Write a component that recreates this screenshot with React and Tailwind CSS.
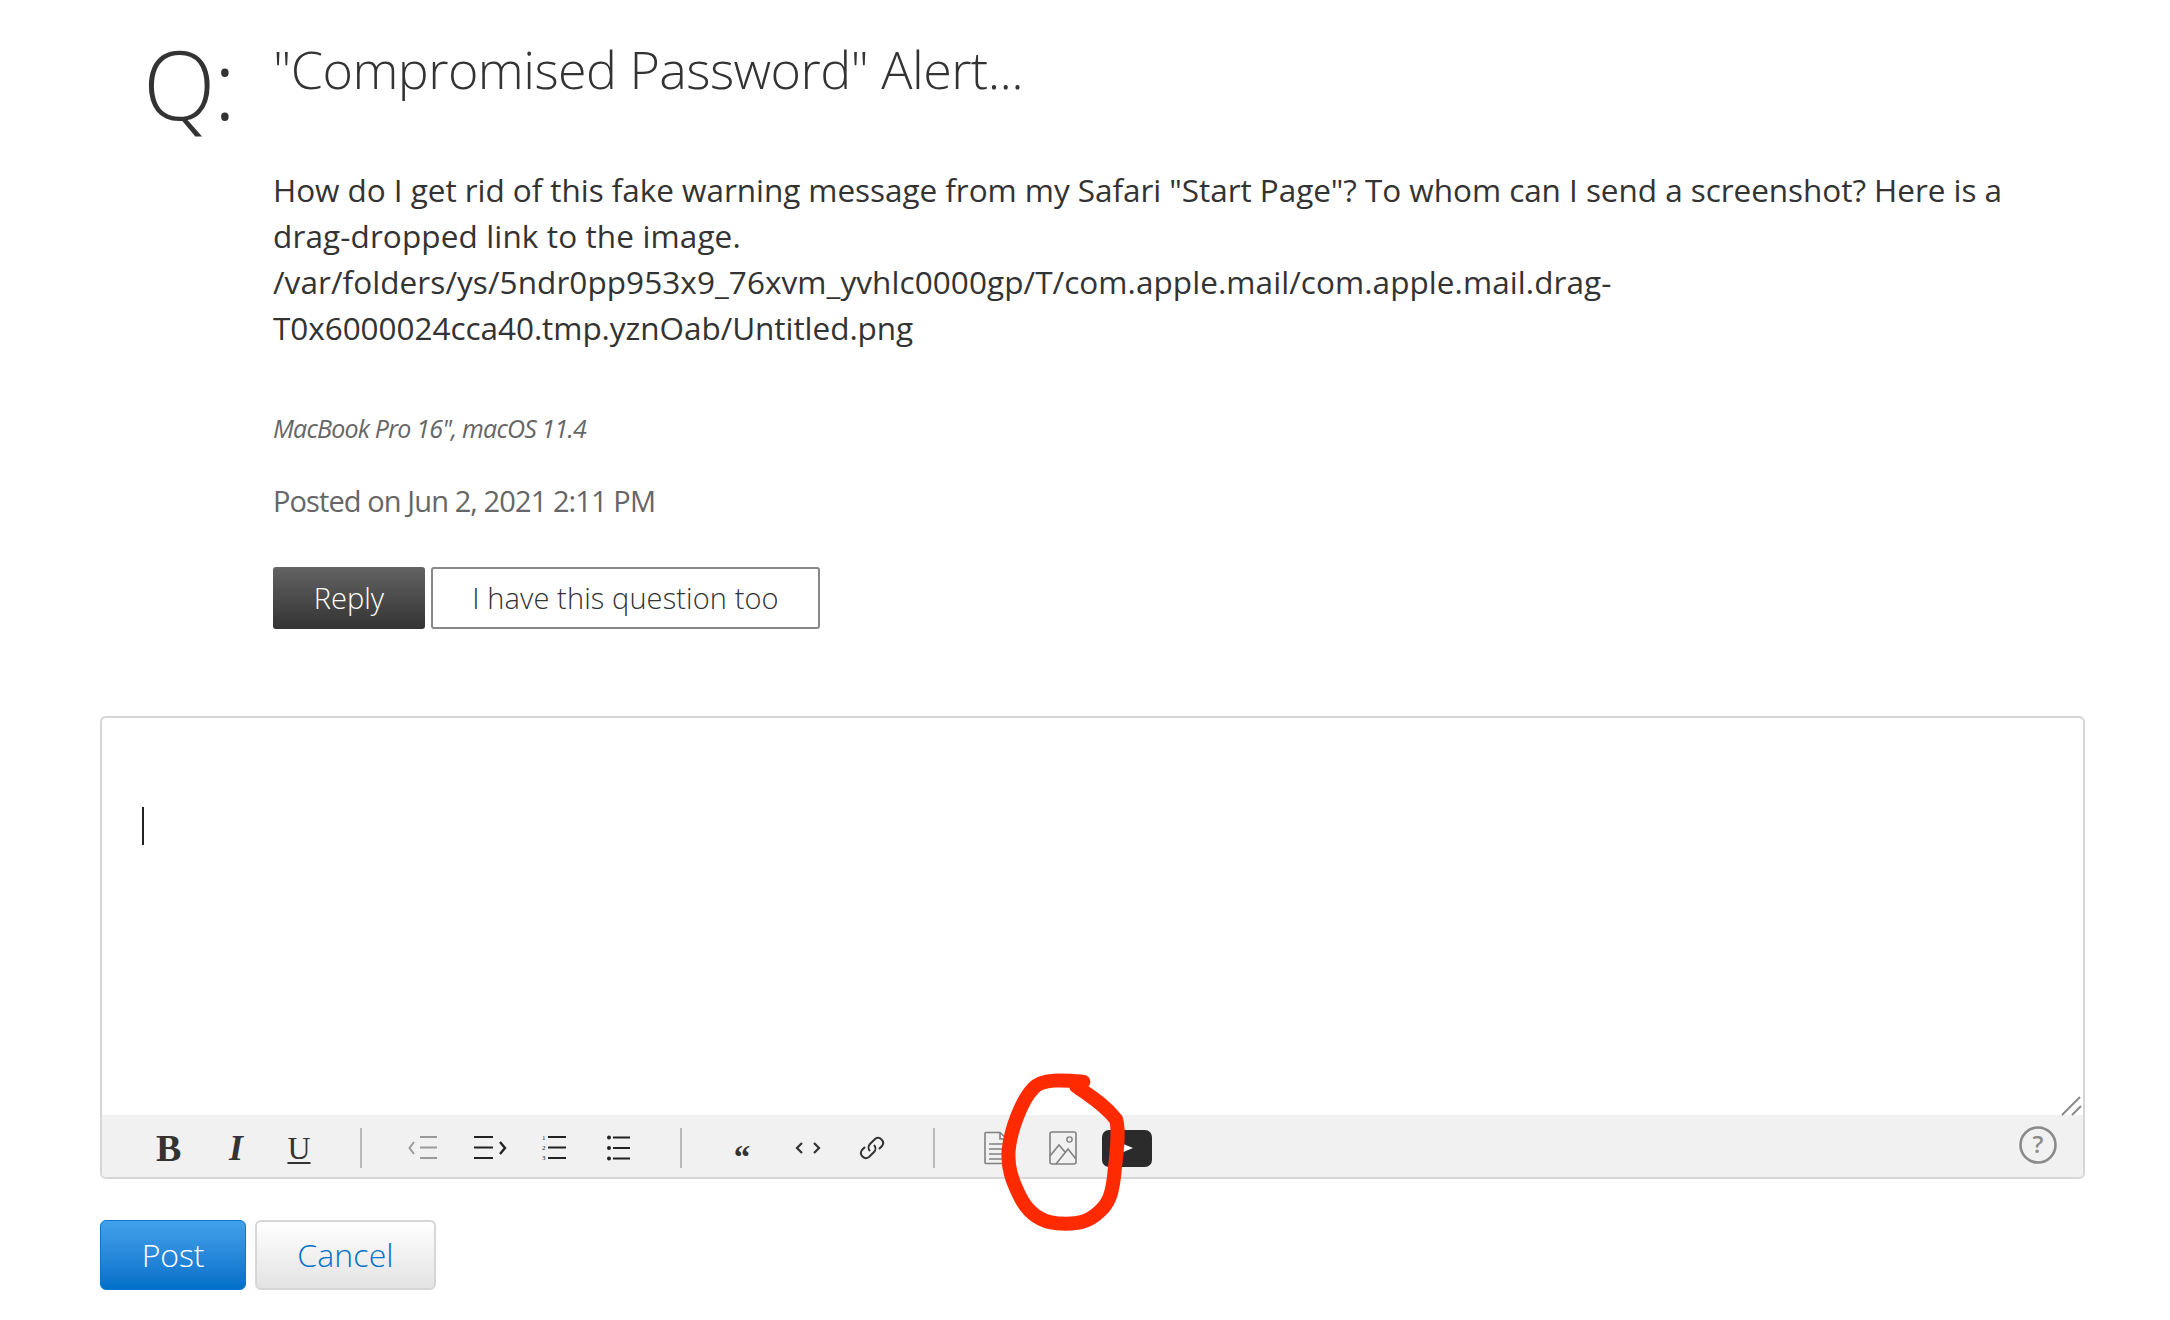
import React from "react";

const Sep = ({ ml }) => <div className={`w-[2px] h-[40px] bg-[#b9b9b9] shrink-0 ${ml}`} />;

const S = ({ w, ml, children }) => (
  <svg width={w} height="40" viewBox={`0 0 ${w} 40`} fill="none" className={`shrink-0 ${ml}`}>{children}</svg>
);

export default function App() {
  return (
    <div className="relative w-[2170px] h-[1320px] bg-white overflow-hidden text-[#333] font-['Open_Sans',sans-serif]">
      <div className="flex pl-[143px] pt-[26px]">
        <div className="w-[130px] shrink-0 text-[95px] leading-[115px] font-light text-[#333] tracking-[-2px] h-[115px]">Q:</div>
        <div className="flex flex-col items-start">
          <h1 className="text-[52px] leading-[72px] font-light tracking-[-0.56px] text-[#333] whitespace-nowrap mt-[7px]">"Compromised Password" Alert...</h1>
          <div className="mt-[62px] text-[31.5px] leading-[46px] tracking-[-0.05px] text-[#333] whitespace-nowrap">
            <p>How do I get rid of this fake warning message from my Safari "Start Page"? To whom can I send a screenshot? Here is a</p>
            <p className="tracking-[0.12px]">drag-dropped link to the image.</p>
            <p className="tracking-[0.07px]">/var/folders/ys/5ndr0pp953x9_76xvm_yvhlc0000gp/T/com.apple.mail/com.apple.mail.drag-</p>
            <p>T0x6000024cca40.tmp.yznOab/Untitled.png</p>
          </div>
          <p className="mt-[59px] text-[25px] leading-[36px] italic tracking-[-0.8px] text-[#666] whitespace-nowrap">MacBook Pro 16", macOS 11.4</p>
          <p className="mt-[35px] text-[29px] leading-[40px] tracking-[-0.9px] text-[#666] whitespace-nowrap">Posted on Jun 2, 2021 2:11 PM</p>
          <div className="mt-[46px] flex gap-[6px]">
            <button className="w-[152px] h-[62px] rounded-[3px] bg-gradient-to-b from-[#646464] to-[#333333] text-white text-[29px] font-light tracking-[0px]">Reply</button>
            <button className="w-[389px] h-[62px] rounded-[3px] border-2 border-[#888] bg-white text-[#333] text-[29px] font-light tracking-[0.1px]">I have this question too</button>
          </div>
        </div>
      </div>

      <div className="relative ml-[100px] mt-[87px] w-[1985px] h-[463px] border-2 border-[#d6d6d6] rounded-[6px] flex flex-col bg-white">
        <div className="flex-1 pl-[40px] pt-[89px]">
          <div className="w-[2px] h-[38px] bg-[#222]" />
        </div>
        <svg width="22" height="20" viewBox="0 0 22 20" className="absolute right-[0px] top-[378px]" fill="none">
          <path d="M1 19 L19 1 M11 19 L20 10" stroke="#8a8a8a" strokeWidth="2" />
        </svg>
        <div className="h-[62px] pt-[4px] bg-[#f1f1f1] flex items-center rounded-b-[4px] shrink-0">
          <span className="ml-[54px] w-[24px] text-center shrink-0 font-['Liberation_Serif',serif] font-bold text-[38px] leading-[40px] text-[#333]">B</span>
          <span className="ml-[46px] w-[20px] text-center shrink-0 font-['Liberation_Serif',serif] font-bold italic text-[36px] leading-[40px] text-[#333]">I</span>
          <span className="ml-[41px] w-[24px] text-center shrink-0 font-['Liberation_Serif',serif] underline underline-offset-[3px] decoration-2 text-[32px] leading-[40px] text-[#333]">U</span>
          <Sep ml="ml-[49px]" />
          <S w={30} ml="ml-[46px]">
            <path d="M6 14 L1.5 20 L6 26" stroke="#999" strokeWidth="2" />
            <path d="M12 9H29M12 19.5H29M12 30H29" stroke="#999" strokeWidth="2" />
          </S>
          <S w={33} ml="ml-[36px]">
            <path d="M0 9H19M0 19.5H19M0 30H19" stroke="#222" strokeWidth="2" />
            <path d="M26 14 L31 20 L26 26" stroke="#222" strokeWidth="2.4" />
          </S>
          <S w={25} ml="ml-[35px]">
            <text x="0" y="12" fontSize="7" fontFamily="Liberation Serif" fill="#222">1</text>
            <text x="0" y="22" fontSize="7" fontFamily="Liberation Serif" fill="#222">2</text>
            <text x="0" y="32" fontSize="7" fontFamily="Liberation Serif" fill="#222">3</text>
            <path d="M6 9H24M6 19.5H24M6 30H24" stroke="#222" strokeWidth="2" />
          </S>
          <S w={23} ml="ml-[40px]">
            <circle cx="2" cy="9.5" r="2" fill="#222" /><circle cx="2" cy="20" r="2" fill="#222" /><circle cx="2" cy="30.5" r="2" fill="#222" />
            <path d="M6 9.5H23M6 20H23M6 30.5H23" stroke="#222" strokeWidth="2" />
          </S>
          <Sep ml="ml-[50px]" />
          <span className="ml-[49px] w-[22px] text-center shrink-0 font-['Liberation_Serif',serif] font-bold text-[33px] leading-[40px] h-[40px] pt-[9px] text-[#333]">“</span>
          <S w={26} ml="ml-[42px]">
            <path d="M7 15 L2 20 L7 25M19 15 L24 20 L19 25" stroke="#333" strokeWidth="2.2" />
          </S>
          <S w={26} ml="ml-[38px]">
            <path d="M11 23 a5 5 0 0 1 0 -7 l5 -5 a5 5 0 0 1 7 7 l-3 3" stroke="#333" strokeWidth="2" />
            <path d="M15 17 a5 5 0 0 1 0 7 l-5 5 a5 5 0 0 1 -7 -7 l3 -3" stroke="#333" strokeWidth="2" />
          </S>
          <Sep ml="ml-[48px]" />
          <svg width="24" height="34" viewBox="0 0 24 34" fill="none" className="shrink-0 ml-[49px]">
            <path d="M1 2.5 a1 1 0 0 1 1 -1 H16 L23 8 V31.5 a1 1 0 0 1 -1 1 H2 a1 1 0 0 1 -1 -1 Z" stroke="#808080" strokeWidth="1.6" />
            <path d="M16 1.5 V8 H23M5 13H19M5 18H19M5 23H19M5 28H19" stroke="#808080" strokeWidth="1.6" />
          </svg>
          <svg width="28" height="34" viewBox="0 0 28 34" fill="none" className="shrink-0 ml-[41px]">
            <rect x="1" y="1" width="26" height="32" rx="2" stroke="#808080" strokeWidth="1.6" />
            <circle cx="20.5" cy="8.5" r="2.6" stroke="#808080" strokeWidth="1.4" />
            <path d="M1 25 L10 14 L16 21M7 33 L19 18 L27 28" stroke="#808080" strokeWidth="1.6" />
          </svg>
          <div className="ml-[25px] w-[50px] h-[37px] rounded-[7px] bg-[#2b2b2b] flex items-center justify-center shrink-0">
            <svg width="12" height="12" viewBox="0 0 12 12"><path d="M0 1 L12 6 L0 11 Z" fill="#fff" /></svg>
          </div>
          <svg width="40" height="40" viewBox="0 0 40 40" fill="none" className="shrink-0 ml-auto mr-[25px] -mt-[6px]">
            <circle cx="20" cy="20" r="17.5" stroke="#8a8a8a" strokeWidth="2.6" />
            <text x="20" y="28" textAnchor="middle" fontSize="24" fontFamily="Open Sans" fontWeight="600" fill="#8a8a8a">?</text>
          </svg>
        </div>
      </div>

      <div className="ml-[100px] mt-[41px] flex gap-[9px]">
        <button className="w-[146px] h-[70px] rounded-[6px] border border-[#0d76cc] bg-gradient-to-b from-[#42a1ec] to-[#0070c9] text-white text-[32px] font-light tracking-[-0.2px]">Post</button>
        <button className="w-[181px] h-[70px] rounded-[6px] border-2 border-[#d6d6d6] bg-gradient-to-b from-white to-[#e3e3e3] text-[#0070c9] text-[32px] font-light tracking-[0.1px]">Cancel</button>
      </div>

      <svg width="300" height="190" viewBox="0 0 900 570" fill="none" className="absolute left-[900px] top-[1060px]">
        <path d="M528 78 C565 105 610 130 648 178 C660 215 648 290 642 350 C636 400 628 430 595 458 C570 480 545 495 470 490 C420 485 385 460 360 410 C335 360 322 320 326 270 C332 210 365 120 400 85 C425 55 490 60 550 65" stroke="#ff2a00" strokeWidth="42" strokeLinecap="round" strokeLinejoin="round" />
      </svg>
    </div>
  );
}
